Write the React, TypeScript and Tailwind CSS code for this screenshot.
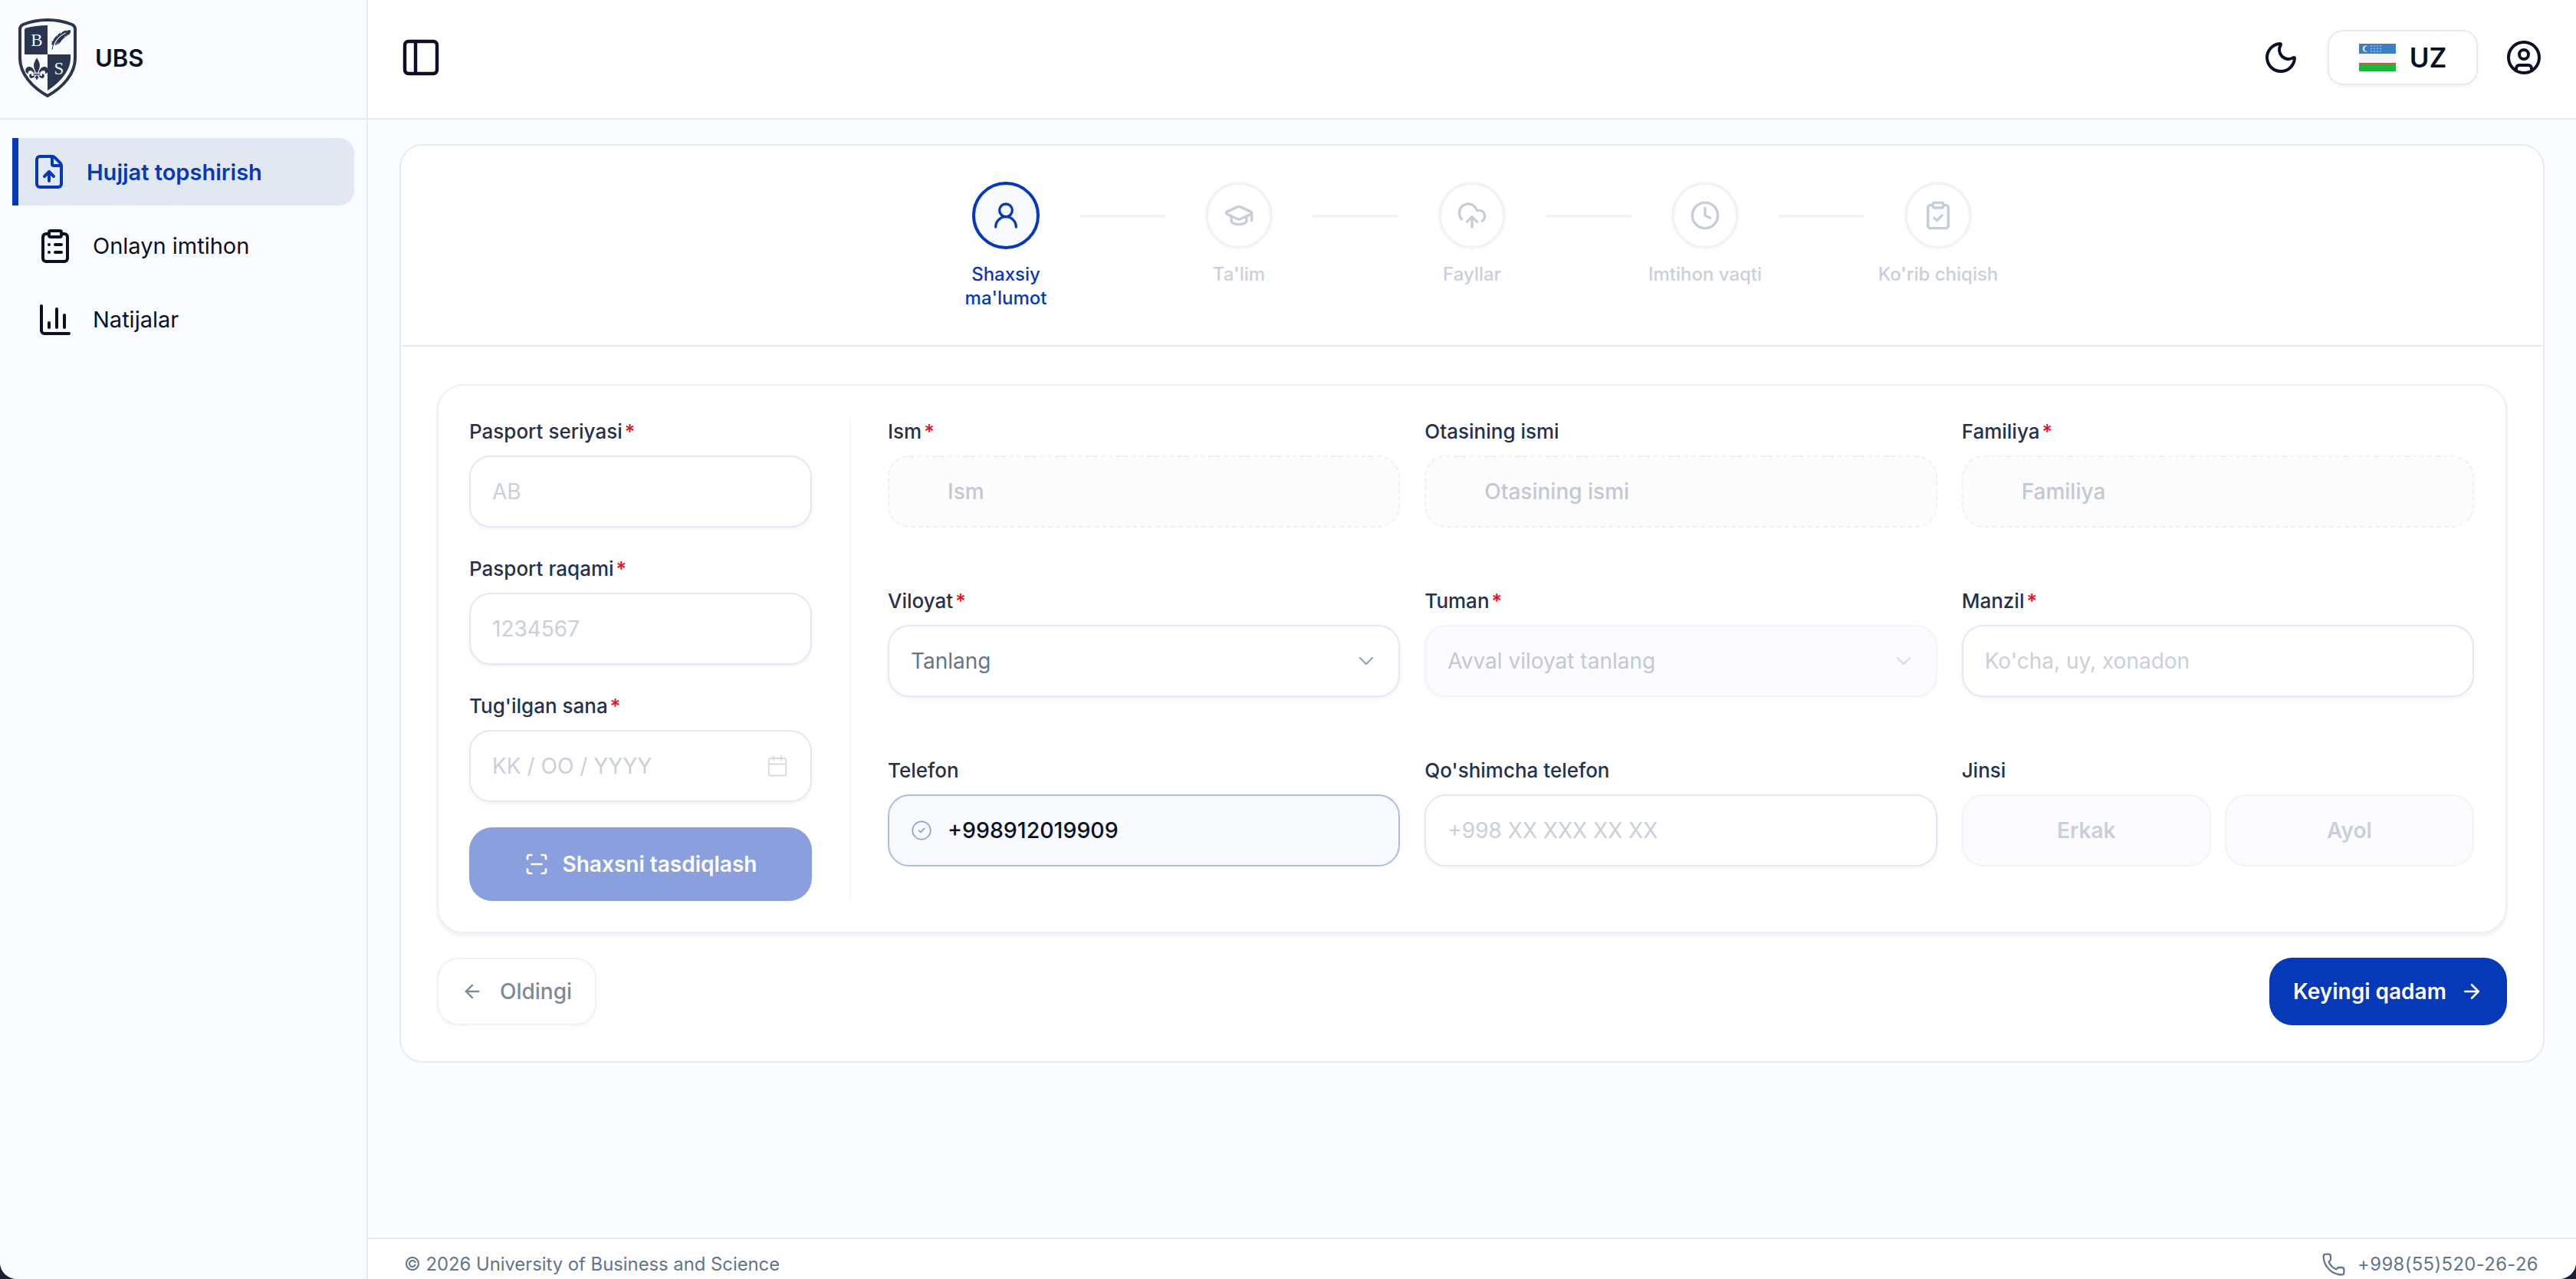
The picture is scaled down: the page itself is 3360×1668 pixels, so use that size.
import {
  ArrowLeft,
  ArrowRight,
  Calendar,
  ChartColumn,
  ChevronDown,
  CircleCheck,
  CircleUser,
  ClipboardCheck,
  ClipboardList,
  Clock,
  CloudUpload,
  FileUp,
  GraduationCap,
  Moon,
  PanelLeft,
  Phone,
  ScanLine,
  UserRound,
} from "lucide-react";
import type { ReactNode } from "react";
import { GiFeather, GiFleurDeLys } from "react-icons/gi";

const inputBase =
  "h-[94px] w-full rounded-[28px] border-2 bg-white px-[28px] text-[28px] outline-none placeholder:text-[#c9cfdc]";
const normalBorder = "border-[#e2e8f4] shadow-[0_2px_4px_rgba(148,163,184,0.14)]";

function Logo() {
  return (
    <svg width="76" height="103" viewBox="0 0 76 103" className="shrink-0">
      <path
        d="M38 2C48 2 60 4 70 8Q74 10 74 14V52C74 72 58 90 38 101C18 90 2 72 2 52V14Q2 10 6 8C16 4 28 2 38 2Z"
        fill="#f8fafc"
        stroke="#2a3550"
        strokeWidth="4"
      />
      <path d="M8 15Q8 13 10 12.5C18 10.5 28 9 38 9V47H8Z" fill="#2a3550" />
      <path d="M38 47H68V52C68 68 54 84 38 94Z" fill="#2a3550" />
      <text x="24" y="36" fontSize="23" textAnchor="middle" fill="#f1f5f9" fontFamily="Liberation Serif, serif">
        B
      </text>
      <text x="53" y="73" fontSize="23" textAnchor="middle" fill="#f1f5f9" fontFamily="Liberation Serif, serif">
        S
      </text>
      <GiFleurDeLys x="8" y="50" size={32} color="#2a3550" />
      <GiFeather x="41" y="14" size={28} color="#2a3550" />
    </svg>
  );
}

function UzFlag() {
  return (
    <svg width="48" height="36" viewBox="0 0 48 36" className="shrink-0">
      <rect width="48" height="13" fill="#3b7fc9" />
      <rect y="13" width="48" height="12" fill="#f4f5f7" />
      <rect y="25" width="48" height="1.5" fill="#d9434e" />
      <rect y="26" width="48" height="10" fill="#1eb53a" />
      <circle cx="9" cy="6.5" r="4" fill="#fff" />
      <circle cx="10.6" cy="6.5" r="3.6" fill="#3b7fc9" />
      {[16, 20, 24, 28].map((x) =>
        [3, 6.5, 10].map((y) => <circle key={`${x}-${y}`} cx={x} cy={y} r="0.7" fill="#fff" />),
      )}
    </svg>
  );
}

function Sidebar() {
  return (
    <aside className="flex w-[480px] shrink-0 flex-col border-r-2 border-[#e5eaf3] bg-[#fafbfe]">
      <div className="flex h-[156px] items-center gap-[24px] border-b-2 border-[#e5eaf3] pb-[4px] pl-[24px]">
        <Logo />
        <span className="pt-[2px] text-[31px] font-semibold text-[#0b1124]">UBS</span>
      </div>
      <nav className="flex flex-col gap-[8.5px] pt-[24px] pr-[16px] pl-[16px]">
        <div className="flex h-[88px] items-center gap-[25px] rounded-r-[20px] border-l-8 border-[#0639b8] bg-[#e2e8f2] pl-[16px] text-[#0639b8]">
          <FileUp size={48} strokeWidth={2} className="shrink-0" />
          <span className="pt-[2px] text-[29px] font-semibold">Hujjat topshirish</span>
        </div>
        <div className="flex h-[88px] items-center gap-[25px] pl-[32px] text-[#0b1124]">
          <ClipboardList size={48} strokeWidth={2} className="shrink-0" />
          <span className="text-[29px]">Onlayn imtihon</span>
        </div>
        <div className="flex h-[88px] items-center gap-[25px] pl-[32px] text-[#0b1124]">
          <ChartColumn size={48} strokeWidth={2} className="shrink-0" />
          <span className="text-[29px]">Natijalar</span>
        </div>
      </nav>
    </aside>
  );
}

function Header() {
  return (
    <header className="flex h-[156px] shrink-0 items-center justify-between border-b-2 border-[#e5eaf3] bg-white pr-[44px] pb-[4px] pl-[41px] text-[#0b1124]">
      <PanelLeft size={56} strokeWidth={1.9} />
      <div className="flex items-center">
        <Moon size={48} strokeWidth={2} />
        <div className="mr-[36px] ml-[37px] flex h-[72px] w-[196px] items-center justify-center gap-[18px] rounded-[20px] border-2 border-[#e5eaf3] shadow-[0_2px_4px_rgba(148,163,184,0.14)]">
          <UzFlag />
          <span className="text-[35px] font-semibold">UZ</span>
        </div>
        <CircleUser size={48} strokeWidth={2} />
      </div>
    </header>
  );
}

const steps = [
  { label: "Shaxsiy ma'lumot", icon: UserRound },
  { label: "Ta'lim", icon: GraduationCap },
  { label: "Fayllar", icon: CloudUpload },
  { label: "Imtihon vaqti", icon: Clock },
  { label: "Ko'rib chiqish", icon: ClipboardCheck },
];

function Stepper() {
  return (
    <div className="flex justify-center border-b-2 border-[#e5eaf3] pt-[47px] pb-[46px]">
      {steps.map((s, i) => {
        const Icon = s.icon;
        const active = i === 0;
        return (
          <div key={s.label} className="flex items-start">
            {i > 0 && <div className="mt-[43px] h-[4px] w-[112px] rounded-full bg-[#f0f3f8]" />}
            <div className="flex w-[192px] flex-col items-center">
              <div
                className={
                  active
                    ? "flex h-[88px] w-[88px] items-center justify-center rounded-full border-4 border-[#0639b8] bg-[#f7f9fc] text-[#0639b8]"
                    : "flex h-[88px] w-[88px] items-center justify-center rounded-full border-4 border-[#f0f3f8] bg-white text-[#c6ccd9]"
                }
              >
                <Icon size={40} strokeWidth={2} />
              </div>
              <div
                className={
                  active
                    ? "mt-[17px] w-[150px] text-center text-[24px] leading-[31px] font-medium text-[#0639b8]"
                    : "mt-[17px] text-center text-[24px] leading-[31px] font-medium text-[#c9cfdc]"
                }
              >
                {s.label}
              </div>
            </div>
          </div>
        );
      })}
    </div>
  );
}

function Field({ label, required, children }: { label: string; required?: boolean; children: ReactNode }) {
  return (
    <div>
      <div className="mb-[15px] flex h-[34px] items-center text-[26px] font-medium text-[#27304d]">
        {label}
        {required && <span className="ml-[3px] text-[#ee0b17]">*</span>}
      </div>
      {children}
    </div>
  );
}

function LockedInput({ placeholder }: { placeholder: string }) {
  return (
    <div className="flex h-[94px] items-center rounded-[28px] border-2 border-dashed border-[#eef1f6] bg-[#fcfcfd] pl-[76px] text-[28px] font-medium text-[#c3c8d5]">
      {placeholder}
    </div>
  );
}

function PersonalForm() {
  return (
    <div className="flex rounded-[34px] border-2 border-[#edf1f7] bg-white pt-[42px] pr-[41px] pb-[40px] pl-[40px] shadow-[0_3px_5px_rgba(148,163,184,0.18)]">
      <div className="flex w-[447px] shrink-0 flex-col gap-[36px]">
        <Field label="Pasport seriyasi" required>
          <input placeholder="AB" className={`${inputBase} ${normalBorder}`} />
        </Field>
        <Field label="Pasport raqami" required>
          <input placeholder="1234567" className={`${inputBase} ${normalBorder}`} />
        </Field>
        <div>
          <Field label="Tug'ilgan sana" required>
            <div className={`flex h-[94px] items-center justify-between rounded-[28px] border-2 bg-white px-[28px] text-[28px] text-[#c9cfdc] ${normalBorder}`}>
              <span>KK / OO / YYYY</span>
              <Calendar size={30} strokeWidth={1.5} className="text-[#d5dae4]" />
            </div>
          </Field>
          <button className="mt-[33px] flex h-[96px] w-full items-center justify-center gap-[18px] rounded-[30px] bg-[#8a9fdd] text-[28px] font-semibold text-white">
            <ScanLine size={32} strokeWidth={2} />
            Shaxsni tasdiqlash
          </button>
        </div>
      </div>
      <div className="mr-[48px] ml-[49px] w-[2px] shrink-0 bg-[#f3f5f9]" />
      <div className="grid flex-1 grid-cols-3 content-start gap-x-[32px] gap-y-[78px]">
        <Field label="Ism" required>
          <LockedInput placeholder="Ism" />
        </Field>
        <Field label="Otasining ismi">
          <LockedInput placeholder="Otasining ismi" />
        </Field>
        <Field label="Familiya" required>
          <LockedInput placeholder="Familiya" />
        </Field>
        <Field label="Viloyat" required>
          <div className={`flex h-[94px] items-center justify-between rounded-[28px] border-2 bg-white pr-[26px] pl-[28px] text-[28px] text-[#677489] ${normalBorder}`}>
            <span>Tanlang</span>
            <ChevronDown size={32} strokeWidth={1.6} className="text-[#94a3b8]" />
          </div>
        </Field>
        <Field label="Tuman" required>
          <div className="flex h-[94px] items-center justify-between rounded-[28px] border-2 border-[#f1f4f8] bg-[#fbfbfd] pr-[26px] pl-[28px] text-[28px] text-[#c3c8d5] shadow-[0_2px_4px_rgba(148,163,184,0.08)]">
            <span>Avval viloyat tanlang</span>
            <ChevronDown size={32} strokeWidth={1.6} className="text-[#d5dae4]" />
          </div>
        </Field>
        <Field label="Manzil" required>
          <input placeholder="Ko'cha, uy, xonadon" className={`${inputBase} ${normalBorder}`} />
        </Field>
        <Field label="Telefon">
          <div className="flex h-[94px] items-center gap-[20px] rounded-[28px] border-2 border-[#a9bbe6] bg-[#f8f9fd] pl-[28px] text-[#0b1124]">
            <CircleCheck size={28} strokeWidth={1.5} className="text-[#8aa0dd]" />
            <span className="text-[28.5px] font-medium">+998912019909</span>
          </div>
        </Field>
        <Field label="Qo'shimcha telefon">
          <input placeholder="+998 XX XXX XX XX" className={`${inputBase} ${normalBorder}`} />
        </Field>
        <Field label="Jinsi">
          <div className="grid grid-cols-2 gap-[18px]">
            <div className="flex h-[94px] items-center justify-center rounded-[28px] border-2 border-[#f0f3f8] bg-[#fbfbfd] text-[28px] font-semibold text-[#c9cfdc]">
              Erkak
            </div>
            <div className="flex h-[94px] items-center justify-center rounded-[28px] border-2 border-[#f0f3f8] bg-[#fbfbfd] text-[28px] font-semibold text-[#c9cfdc]">
              Ayol
            </div>
          </div>
        </Field>
      </div>
    </div>
  );
}

function Footer() {
  return (
    <footer className="mt-auto flex h-[54px] shrink-0 items-center justify-between border-t-2 border-[#e5eaf3] bg-white pt-[14px] pr-[49px] pl-[47px] text-[23.8px] text-[#64748b]">
      <span>© 2026 University of Business and Science</span>
      <div className="flex items-center gap-[15px]">
        <Phone size={32} strokeWidth={1.7} />
        <span className="tracking-[0.4px]">+998(55)520-26-26</span>
      </div>
    </footer>
  );
}

export default function App() {
  return (
    <div className="h-[1668px] bg-[#171f30] [font-family:Inter,sans-serif]">
      <div className="flex h-full overflow-hidden rounded-b-[22px] bg-[#fbfcfe]">
        <Sidebar />
        <main className="flex min-w-0 flex-1 flex-col">
          <Header />
          <div className="pt-[32px] pr-[41px] pl-[41px]">
            <div className="rounded-[30px] border-2 border-[#e5eaf3] bg-white">
              <Stepper />
              <div className="px-[47px] pt-[49px] pb-[47px]">
                <PersonalForm />
                <div className="mt-[32px] flex justify-between">
                  <button className="flex h-[88px] w-[208px] items-center justify-center gap-[22px] rounded-[28px] border-2 border-[#eef1f6] bg-white text-[28px] font-medium text-[#7f8899] shadow-[0_2px_4px_rgba(148,163,184,0.1)]">
                    <ArrowLeft size={28} strokeWidth={2} />
                    Oldingi
                  </button>
                  <button className="flex h-[88px] w-[310px] items-center justify-center gap-[18px] rounded-[30px] bg-[#0639b8] text-[28px] font-semibold text-white">
                    Keyingi qadam
                    <ArrowRight size={30} strokeWidth={2} />
                  </button>
                </div>
              </div>
            </div>
          </div>
          <Footer />
        </main>
      </div>
    </div>
  );
}
